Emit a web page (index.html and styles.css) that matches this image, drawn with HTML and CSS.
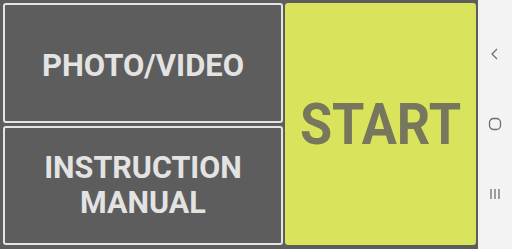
FILE: index.html
```html
<!DOCTYPE html>
<html lang="en">
<head>
    <meta charset="UTF-8">
    <meta name="viewport" content="width=device-width, initial-scale=1.0">
    <title>Camera</title>
    <link rel="stylesheet" href="styles.css">
</head>
<body>
    <div class="app">
        <main class="screen">
            <div class="menu">
                <button class="menu-btn photo">PHOTO/VIDEO</button>
                <button class="menu-btn manual">INSTRUCTION<br>MANUAL</button>
            </div>
            <button class="start-btn"><span class="start-label">START</span></button>
        </main>
        <nav class="navbar">
            <svg width="12" height="14" viewBox="0 0 12 14"><path d="M8 2 L3 7 L8 12" fill="none" stroke="#6e6e6e" stroke-width="1.3"/></svg>
            <svg width="14" height="14" viewBox="0 0 14 14"><rect x="1.5" y="1.5" width="11" height="11" rx="4" fill="none" stroke="#6e6e6e" stroke-width="1.3"/></svg>
            <svg width="14" height="14" viewBox="0 0 14 14"><path d="M3 2 V12 M7 2 V12 M11 2 V12" stroke="#6e6e6e" stroke-width="1.3"/></svg>
        </nav>
    </div>
</body>
</html>
```
FILE: styles.css
```css
html, body { margin: 0; padding: 0; }
body { width: 512px; height: 249px; overflow: hidden; font-family: Roboto, "Liberation Sans", sans-serif; background: #5d5d5d; }
.app { display: flex; height: 249px; }
.screen { flex: 1; display: grid; grid-template-columns: 280px 1fr; gap: 2px; padding: 3px 2px 4px 3px; background: #5d5d5d; }
.menu { display: grid; grid-template-rows: 1fr 1fr; gap: 3px; }
.menu-btn { background: #5d5d5d; border: 2px solid #e4e4e4; border-radius: 3px; color: #e3e3e3; font-family: inherit; font-weight: bold; font-size: 31px; line-height: 35px; padding: 0; }
.photo { padding-top: 5px; }
.manual { font-size: 30.5px; }
.start-btn { background: #d9e35b; border: none; border-radius: 3px; color: #76775c; font-family: inherit; font-weight: bold; font-size: 58px; padding: 0; }
.start-label { display: inline-block; transform: scaleX(0.9); }
.navbar { width: 34px; background: #f3f3f3; display: flex; flex-direction: column; align-items: center; justify-content: space-between; padding: 47px 0 48px; box-sizing: border-box; }
```
